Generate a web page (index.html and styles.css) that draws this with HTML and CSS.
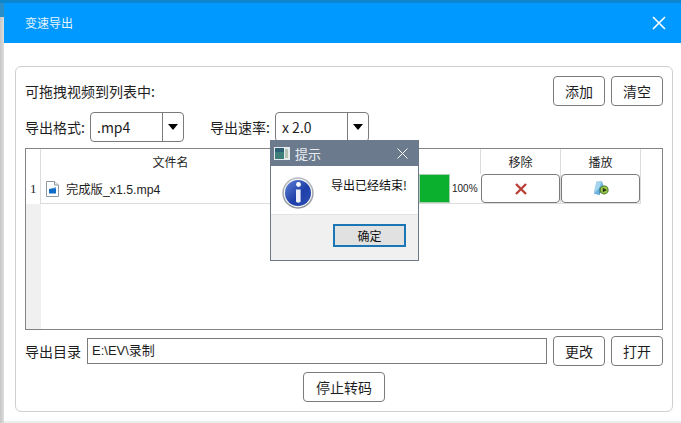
FILE: index.html
```html
<!DOCTYPE html>
<html lang="zh-CN">
<head>
<meta charset="utf-8">
<title>变速导出</title>
<link rel="stylesheet" href="styles.css">
</head>
<body>
<div class="window">
  <header class="titlebar">
    <span class="title">变速导出</span>
    <svg class="close" width="14" height="14" viewBox="0 0 14 14"><path d="M1 1L13 13M13 1L1 13" stroke="#fff" stroke-width="1.6" fill="none"/></svg>
  </header>
  <main class="panel">
    <div class="row between">
      <span class="label">可拖拽视频到列表中:</span>
      <div class="btns">
        <button class="btn">添加</button>
        <button class="btn">清空</button>
      </div>
    </div>
    <div class="row">
      <span class="label lab-format">导出格式:</span>
      <div class="combo c-format"><span class="combo-text">.mp4</span><span class="combo-arrow"><i class="tri"></i></span></div>
      <span class="label lab-rate">导出速率:</span>
      <div class="combo c-rate"><span class="combo-text">x 2.0</span><span class="combo-arrow"><i class="tri"></i></span></div>
    </div>
    <section class="table">
      <div class="vhead">
        <div class="vh-top"></div>
        <div class="vh-num">1</div>
        <div class="vh-rest"></div>
      </div>
      <div class="grid">
        <div class="th">文件名</div>
        <div class="th"></div>
        <div class="th">移除</div>
        <div class="th">播放</div>
        <div class="td name">
          <svg width="13" height="16" viewBox="0 0 13 16"><path d="M.5.5H8.5L12.5 4V15.5H.5Z" fill="#fff" stroke="#8f99a1"/><path d="M8.5 .5V4H12.5" fill="#e6eaee" stroke="#8f99a1"/><path d="M3 8L10 6.2V8H3Z" fill="#3a8fd8"/><rect x="3" y="8" width="7" height="4.5" fill="#0f6cc4"/></svg>
          <span>完成版_x1.5.mp4</span>
        </div>
        <div class="td progress"><div class="bar"></div><span class="pct">100%</span></div>
        <div class="td cellbtn"><button class="btn small">
          <svg width="14" height="14" viewBox="0 0 14 14"><path d="M2 2L12 12M12 2L2 12" stroke="#b8413a" stroke-width="2.4" fill="none"/></svg>
        </button></div>
        <div class="td cellbtn"><button class="btn small">
          <svg width="18" height="18" viewBox="0 0 20 20"><path d="M5 2L11 1L13 7L8 17L2 15Z" fill="#6fb4dc"/><path d="M5 2L11 1L8 9L2 15Z" fill="#a3d5ee"/><path d="M8 9L13 7L8 17Z" fill="#3f8cbd"/><circle cx="13.5" cy="11" r="5" fill="#4d7a2a"/><circle cx="13.5" cy="11" r="3.8" fill="#9ecb4a"/><path d="M12 8.5L16.5 11L12 13.5Z" fill="#26331a"/></svg>
        </button></div>
      </div>
    </section>
    <div class="row">
      <span class="label lab-dir">导出目录</span>
      <div class="path">E:\EV\录制</div>
      <div class="btns">
        <button class="btn">更改</button>
        <button class="btn">打开</button>
      </div>
    </div>
    <div class="row center">
      <button class="btn stop">停止转码</button>
    </div>
  </main>
</div>

<aside class="dialog">
  <div class="d-title">
    <svg class="d-icon" width="16" height="13" viewBox="0 0 16 13"><rect width="16" height="13" fill="#e8ebee"/><rect x="1" y="1" width="9" height="11" fill="#3d7f78"/><rect x="1" y="1" width="9" height="4" fill="#2c5f74"/><rect x="11" y="2" width="3" height="9" fill="#b6c2b4"/></svg>
    <span>提示</span>
    <svg class="d-close" width="11" height="11" viewBox="0 0 11 11"><path d="M.5.5L10.5 10.5M10.5.5L.5 10.5" stroke="#fff" stroke-width="1" fill="none"/></svg>
  </div>
  <div class="d-body">
    <svg class="info" width="32" height="32" viewBox="0 0 32 32">
      <defs>
        <linearGradient id="ring" x1="0" y1="0" x2="0" y2="1"><stop offset="0" stop-color="#b9bdc4"/><stop offset="1" stop-color="#8f949c"/></linearGradient>
        <linearGradient id="blue" x1="0" y1="0" x2="1" y2="1"><stop offset="0" stop-color="#5f83d8"/><stop offset=".55" stop-color="#1f3fa8"/><stop offset="1" stop-color="#2b4fb4"/></linearGradient>
      </defs>
      <circle cx="16" cy="16" r="15.7" fill="url(#ring)"/>
      <circle cx="16" cy="16" r="14.2" fill="#f2f3f5"/>
      <circle cx="16" cy="16" r="13" fill="url(#blue)"/>
      <circle cx="16.5" cy="7.5" r="2.4" fill="#fff"/>
      <path d="M14 12.5H18.6V24.5C18.6 26 14 26 14 24.5Z" fill="#eef1f8"/>
    </svg>
    <span class="msg">导出已经结束!</span>
  </div>
  <div class="d-foot"><button class="ok">确定</button></div>
</aside>
</body>
</html>
```

FILE: styles.css
```css
* { box-sizing: border-box; }

html, body { height: 100%; }

body {
  margin: 0;
  overflow: hidden;
  height: 423px;
  padding: 3px 0 2px 4px;
  font-family: "Noto Sans CJK SC", "Noto Sans", sans-serif;
  color: #1e1e1e;
  background:
    linear-gradient(#0b86cf, #0b86cf) top / 100% 3px no-repeat,
    linear-gradient(#2a8fc8, #2a8fc8) left top / 4px 17px no-repeat,
    linear-gradient(90deg, #c6c6c6, #dedede) left / 4px 100% no-repeat,
    #ececec;
}

.window {
  height: 418px;
  background: #fff;
  display: flex;
  flex-direction: column;
}

.titlebar {
  flex: none;
  height: 40px;
  background: #0099ff;
  color: #e8f5ff;
  display: flex;
  align-items: center;
  justify-content: space-between;
  padding: 0 15px 0 21px;
}

.title { font-size: 12px; line-height: 16px; }

.panel {
  margin: 23px 8px 0 11px;
  height: 346px;
  border: 1px solid #cfcfcf;
  border-radius: 6px;
  padding: 9px;
  display: flex;
  flex-direction: column;
  gap: 6px;
}

.row {
  flex: none;
  height: 30px;
  display: flex;
  align-items: center;
}

.between { justify-content: space-between; }
.center { justify-content: center; }

.label { font-size: 14px; line-height: 20px; white-space: nowrap; }
.lab-format { width: 65px; }
.lab-rate { width: 65px; margin-left: 26px; }
.lab-dir { width: 62px; }

.btns { display: flex; gap: 6px; }

.btn {
  width: 52px;
  height: 30px;
  padding: 0;
  font: inherit;
  font-size: 14px;
  color: inherit;
  background: #fff;
  border: 1px solid #7b7b7b;
  border-radius: 4px;
  display: flex;
  align-items: center;
  justify-content: center;
}

.stop { width: 82px; }

.combo {
  height: 30px;
  border: 1px solid #7b7b7b;
  border-radius: 4px;
  display: flex;
  background: #fff;
}

.c-format { width: 94px; }
.c-rate { width: 94px; }

.combo-text {
  flex: 1;
  padding-left: 6px;
  font-size: 14px;
  line-height: 28px;
}

.combo-arrow {
  width: 21px;
  border-left: 1px solid #7b7b7b;
  display: flex;
  align-items: center;
  justify-content: center;
}

.tri {
  width: 0;
  height: 0;
  border-left: 5px solid transparent;
  border-right: 5px solid transparent;
  border-top: 6px solid #000;
}

.table {
  flex: none;
  height: 182px;
  border: 1px solid #848484;
  display: flex;
  background: #fff;
}

.vhead {
  flex: none;
  width: 15px;
  display: flex;
  flex-direction: column;
}

.vh-top { height: 25px; border-right: 1px solid #dcdcdc; }

.vh-num {
  height: 30px;
  border-right: 1px solid #dcdcdc;
  font-family: "Liberation Serif", serif;
  font-size: 13px;
  line-height: 29px;
  padding-left: 4px;
}

.vh-rest {
  flex: 1;
  background: #f0f0f0;
}

.grid {
  flex: none;
  display: grid;
  grid-template-columns: 260px 180px 80px 80px;
  grid-template-rows: 25px 30px;
  height: 55px;
}

.th {
  border-right: 1px solid #dcdcdc;
  font-size: 12px;
  line-height: 25px;
  text-align: center;
}

.td { border-bottom: 1px solid #dcdcdc; }

.name {
  display: flex;
  align-items: center;
  gap: 7px;
  padding-left: 5px;
  font-family: "Liberation Sans", "Noto Sans CJK SC", sans-serif;
  font-size: 12.3px;
  grid-column: 1;
}

.progress {
  display: flex;
  align-items: stretch;
  justify-content: flex-end;
}

.bar {
  width: 31px;
  margin: 0 2px 0 0;
  height: 29px;
  background: #0bb02f;
  border: 1px solid #a8cdb0;
}

.pct {
  width: 29px;
  font-family: "Liberation Sans", sans-serif;
  font-size: 10px;
  line-height: 29px;
}

.cellbtn { border-right: 1px solid #dcdcdc; }

.small { width: 79px; height: 29px; }

.path {
  flex: none;
  width: 460px;
  height: 26px;
  margin-right: 6px;
  border: 1px solid #7b7b7b;
  background: #fff;
  padding-left: 4px;
  font-family: "Liberation Sans", "Noto Sans CJK SC", sans-serif;
  font-size: 13px;
  line-height: 24px;
}

.dialog {
  position: absolute;
  left: 270px;
  top: 140px;
  width: 149px;
  height: 121px;
  border: 1px solid #6b7888;
  background: #fff;
  display: flex;
  flex-direction: column;
}

.d-title {
  flex: none;
  height: 26px;
  margin-top: -1px;
  background: #6b7a8c;
  color: #e9edf1;
  font-size: 13px;
  display: flex;
  align-items: center;
  padding: 0 10px 0 3px;
}

.d-icon { margin-right: 5px; }
.d-close { margin-left: auto; }

.d-body {
  flex: 1;
  display: flex;
  align-items: flex-start;
  padding: 11px 0 0 11px;
  border-bottom: 1px solid #e4e4e4;
}

.msg {
  margin-left: 17px;
  font-size: 12px;
  line-height: 18px;
  margin-top: -1px;
  color: #111;
}

.d-foot {
  flex: none;
  height: 45px;
  background: #f0f0f0;
  display: flex;
  justify-content: flex-end;
  padding: 9px 12px 0 0;
}

.ok {
  width: 73px;
  height: 23px;
  padding: 0;
  font: inherit;
  font-size: 12px;
  color: #111;
  background: #e1e1e1;
  border: 2px solid #1a76b4;
  display: flex;
  align-items: center;
  justify-content: center;
}
```
